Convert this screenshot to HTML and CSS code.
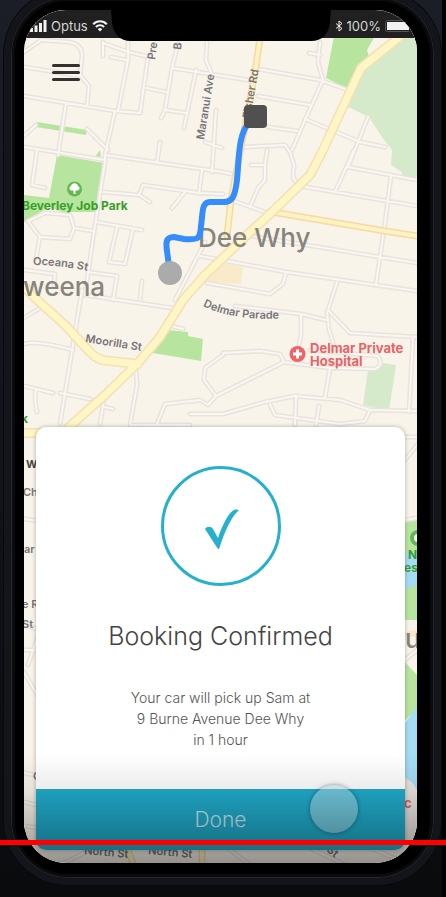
FILE: index.html
```html
<!DOCTYPE html>
<html lang="en">
<head>
<meta charset="utf-8">
<meta name="viewport" content="width=device-width, initial-scale=1">
<title>Booking Confirmed</title>
<link rel="stylesheet" href="styles.css">
</head>
<body>
<div class="phone">
  <div class="screen">
    <svg class="map" viewBox="24 10 393 853" preserveAspectRatio="xMidYMin slice" aria-hidden="true">
      <defs>
        <path id="streets" d="M24 52L40 41M40 40L70 42Q82 45 82 55L80 75L89 86L87 106M24 67L80 76M24 96L115 111L140 113L148 57M103 42V56M103 43L128 52L150 57M128 42V60L118 111M111 57L126 60M178 44L172 68L165 110L161 118M146 88L166 92M172 68L248 80M196 70L184 128M165 110L186 113M207 42L206 60L211 72M115 111L105 155M66 103L58 155M24 136L36 125M87 129L108 150M24 147L105 160M160 142L157 163M205 142L222 148M216 110L212 172
        M258 69L320 80L348 90M320 42L318 62L323 80L305 120L292 150M309 53L320 55M258 96L310 105M268 127L297 131M305 119L360 142L385 147M368 117L348 167M243 147L285 145L290 152L294 165L293 178L300 186L335 192L417 206M223 172L232 174M231 200L265 212M251 165H265L267 150M265 165V180L258 188L250 207M354 150L335 192M348 167L417 180M391 176L384 230L376 284M245 235L417 263M200 256L286 272L417 291M286 272L283 284L270 294L207 283M338 279L328 310L350 333L417 337
        M105 155L223 172M105 155V162L92 245L85 295M37 150L32 185L45 188M202 170L199 193M103 192L139 195L143 185L199 193L223 194M139 195L150 202M185 192L172 208M28 221L45 213L70 215L74 228L70 239L40 237ZM74 228L93 231M40 237L36 258M96 222L142 230M117 227L109 262L125 264L133 229M24 270L55 274L54 285M88 272L117 276L113 300M142 281L140 300M205 242L175 300
        M82 290L60 424M24 344Q35 340 73 350M24 318L40 308M24 386L53 393M36 389Q34 400 37 412M60 393L90 399M105 393L100 424M104 407L113 409M85 295L172 308M168 325L183 329M136 370L137 385L130 425M130 425H190M223 355L205 368L204 380L216 396L208 405L200 400L165 404L157 424M216 396L284 362L280 354L260 351L223 353M235 306L301 314L326 320M301 314V335L299 345M327 312L329 330L334 345M413 337L409 412M284 362L330 368L375 369Q384 365 378 356L310 350M330 368L325 398M190 414H223L265 402L295 396L340 400L370 410L417 411M270 404L275 415L340 424L365 421L370 410M296 397L295 425M319 406L316 425M405 437H417
        M24 519L40 521M24 625L40 630L28 665M24 650H40M24 672L40 700M24 773L40 776M24 802L40 806M24 826L40 828M405 520L417 518M405 460L417 445M405 660L417 650M60 865L90 850M230 850L250 865M310 848L345 865M375 850L410 865"/>
        <path id="main-roads" d="M402 35L361 68L347 98L323 150L310 175L272 212L245 237L205 275L183 300L160 337L138 363L105 395L68 428M24 287L35 298L65 325L90 352Q98 361 110 361L138 364M24 433H60"/>
        <path id="side-roads" d="M260 38L256 66L250 100L231 200L227 236M272 212L385 231L417 236M128 850L134 866M202 850V866"/>
        <path id="oceana" d="M33 265Q62 265 92 272"/>
        <path id="parade" d="M203 306Q235 322 290 318"/>
      </defs>
      <rect class="land" x="24" y="10" width="393" height="853"/>
      <path class="park" d="M334 36H375L367 50L370 60L348 89L326 78ZM57 155L104 163L98 212H62L49 207L24 222V195L49 198ZM95 157L100 150L101 158ZM37 122L87 130L86 135L36 127ZM167 330L188 332V336L203 339L201 361L153 353ZM403 522L417 518V620H403ZM403 660L417 675V710L403 722Z"/>
      <path class="wood" d="M417 36L400 40L360 70L346 106L369 117L376 128L384 140L392 150L391 165L402 172V177H417ZM383 363L396 365L389 411L363 405L368 370Z"/>
      <path class="water" d="M403 552H417V585L403 590ZM403 726L417 706V790L403 776Z"/>
      <path class="block" d="M207 268L226 264L243 266L241 284L207 282ZM403 632L417 630V637H403Z"/>
      <path class="shore" d="M403 778Q417 780 417 800V840H403Z"/>
      <use href="#streets" class="street-edge"/>
      <use href="#streets" class="street"/>
      <use href="#side-roads" class="side-edge"/>
      <use href="#side-roads" class="side"/>
      <use href="#main-roads" class="main-edge"/>
      <use href="#main-roads" class="main-road"/>
      <g class="street-name">
        <text transform="translate(155 60) rotate(-82)">Pre</text>
        <text transform="translate(181 50) rotate(-84)">B</text>
        <text transform="translate(204 140) rotate(-81)">Maranui Ave</text>
        <text transform="translate(250 119) rotate(-80)">Fisher Rd</text>
        <text><textPath href="#oceana">Oceana St</textPath></text>
        <text><textPath href="#parade">Delmar Parade</textPath></text>
        <text transform="translate(85 342) rotate(9)">Moorilla St</text>
        <text class="strong" x="26" y="468">W</text>
        <text x="23" y="496">Ch</text>
        <text x="24" y="553">ar</text>
        <text x="22" y="608">e R</text>
        <text x="22" y="628">St</text>
        <text x="33" y="780">C</text>
        <text transform="translate(84 854) rotate(5)">North St</text>
        <text transform="translate(148 854) rotate(5)">North St</text>
        <text transform="translate(326 851) rotate(38)">St</text>
      </g>
      <g class="suburb">
        <text x="198" y="247">Dee Why</text>
        <text x="23" y="296">weena</text>
        <text x="405" y="648">u</text>
      </g>
      <g class="park-name">
        <text x="22" y="210">Beverley Job Park</text>
        <text x="21" y="423">k</text>
        <text x="408" y="559">N</text>
        <text x="404" y="572">es</text>
      </g>
      <circle class="park-pin" cx="74.500" cy="189" r="7.500"/>
      <path class="pin-glyph" d="M73.500 194v-3.500h-2a2.300 2.300 0 0 1-.5-4.500 3.600 3.600 0 0 1 7 0 2.300 2.300 0 0 1-.5 4.500h-2v3.500z"/>
      <circle class="park-pin" cx="418" cy="538" r="8"/>
      <circle class="pin-glyph" cx="418" cy="538" r="4"/>
      <circle class="care-pin" cx="297.500" cy="354" r="8"/>
      <path class="pin-glyph" d="M296 349.500h3v3h3v3h-3v3h-3v-3h-3v-3h3z"/>
      <g class="care-name">
        <text x="310" y="353">Delmar Private</text>
        <text x="310" y="366">Hospital</text>
        <text x="404" y="808">c</text>
      </g>
      <path class="route" d="M250 122C238 132 239 160 237 180C235 197 232 202 224 202H211C201 201 203 214 201 226C200 239 199 240 184 239L174 237C165 237 166 244 167 251L169 266"/>
      <rect class="route-end" x="244" y="105" width="23" height="23" rx="4"/>
      <circle class="route-start" cx="170" cy="273" r="12"/>
    </svg>

    <header class="status">
      <div class="status-side">
        <svg class="signal" width="17" height="12" viewBox="0 0 17 12" aria-hidden="true"><path d="M0 8h3v4H0zM4.500 5.500h3V12h-3zM9 3h3v9H9zM13.500 0h3v12h-3z"/></svg>
        <span>Optus</span>
        <svg width="16" height="12" viewBox="0 0 16 12" aria-hidden="true"><path class="wave" d="M1.200 4.200a9.500 9.500 0 0 1 13.600 0M3.900 7a5.600 5.600 0 0 1 8.200 0"/><path d="M5.800 9.200a3.100 3.100 0 0 1 4.400 0L8 11.600z"/></svg>
      </div>
      <svg class="notch" viewBox="0 0 220 32" preserveAspectRatio="none" aria-hidden="true"><path d="M0 0L1 12C2 24 9 31 20 31H200C211 31 218 24 219 12L220 0Z"/></svg>
      <div class="status-side status-end">
        <svg width="8" height="12" viewBox="0 0 8 12" aria-hidden="true"><path class="rune" d="M1 3.500l6 5-3 2.500V1l3 2.500-6 5"/></svg>
        <span>100%</span>
        <svg class="battery" width="24" height="12" viewBox="0 0 24 12" aria-hidden="true"><rect class="shell" x=".5" y=".5" width="26" height="11" rx="2"/><path d="M2 2h22v8H2z"/></svg>
      </div>
    </header>

    <button class="menu" type="button" aria-label="Menu"><span></span><span></span><span></span></button>

    <main class="card">
      <svg class="tick" viewBox="0 0 120 120" aria-hidden="true"><circle cx="60" cy="60" r="58.500"/><path d="M44 63C46 60 50 60 52 63L57 72C61 60 67 47 73 44C75 43 77 44 78 44C70 51 64 65 58 83H57Z"/></svg>
      <h1>Booking Confirmed</h1>
      <p>Your car will pick up Sam at<br>9 Burne Avenue Dee Why<br>in 1 hour</p>
      <div class="action">
        <button class="done" type="button">Done</button>
        <span class="touch"></span>
      </div>
    </main>
    <div class="shade"></div>
  </div>
</div>
<div class="progress"></div>
</body>
</html>
```
FILE: styles.css
```css
* {
  box-sizing: border-box;
}

html {
  overflow: hidden;
  background: #000;
}

body {
  position: relative;
  display: flex;
  min-height: 100vh;
  margin: 0;
  background:
    linear-gradient(#000, #000) right / 4px 100% no-repeat,
    linear-gradient(#1b1e27, #111218 60%, #0a0b0d);
  font-family: Inter, "Liberation Sans", sans-serif;
}

button {
  border: 0;
  font: inherit;
}

.phone {
  display: flex;
  flex: 1;
  margin: -10px 5px 12px 4px;
  padding: 13px 17px 15px 13px;
  border: 7px solid #14151b;
  border-radius: 64px;
  background: #000;
  box-shadow: 0 0 0 1px #08090c, inset 0 0 0 1px #26272d, inset 0 0 0 4px #0b0b0e;
}

.screen {
  position: relative;
  display: flex;
  flex: 1;
  flex-direction: column;
  overflow: hidden;
  border-radius: 42px;
  background: #f8f4e9;
}

.map {
  position: absolute;
  inset: 0;
  width: 100%;
  height: 100%;
}

.map path,
.map use {
  stroke-linecap: round;
  stroke-linejoin: round;
}

.land { fill: #f8f4e9; }
.park { fill: #b7e5a0; }
.wood { fill: #d5eacb; }
.water { fill: #a5dcf5; }
.block { fill: #f9ebc9; }
.shore { fill: #e9e5e0; }

.street-edge { fill: none; stroke: #e9e2dd; stroke-width: 5px; }
.street { fill: none; stroke: #faf7f2; stroke-width: 2px; }
.side-edge { fill: none; stroke: #f6d9a4; stroke-width: 7px; }
.side { fill: none; stroke: #fdf3c3; stroke-width: 4px; }
.main-edge { fill: none; stroke: #f6dfb4; stroke-width: 10px; }
.main-road { fill: none; stroke: #fef6c5; stroke-width: 7px; }

.street-name {
  fill: #77757a;
  font-size: 11px;
  font-weight: 600;
}

.street-name .strong { fill: #444; font-weight: 700; }
.suburb { fill: #87847e; font-size: 26px; font-weight: 500; }
.park-name { fill: #36a025; font-size: 12px; font-weight: 700; }
.care-name { fill: #e96368; font-size: 13px; font-weight: 700; }
.park-pin { fill: #62b951; }
.care-pin { fill: #ec6669; }
.pin-glyph { fill: #fff; }
.route { fill: none; stroke: #358cfb; stroke-width: 6px; }
.route-end { fill: #505050; }
.route-start { fill: #ababab; }

.status {
  position: relative;
  display: grid;
  grid-template-columns: 1fr 220px 1fr;
  height: 28px;
  background: #202020;
  color: #d6d6d6;
  font-size: 13px;
}

.status-side {
  display: flex;
  align-items: center;
  gap: 4px;
  padding-left: 6px;
}

.status-end {
  justify-content: flex-end;
  padding: 0 8px 0 0;
}

.status-side svg {
  flex: none;
  fill: #f2f2f2;
}

.status .wave,
.status .rune {
  fill: none;
  stroke: #f2f2f2;
}

.status .wave { stroke-width: 2px; }
.status .rune { stroke-width: 1px; }
.status .shell { fill: none; stroke: #555; }

.status .notch {
  width: 100%;
  height: 32px;
  fill: #000;
}

.menu {
  position: relative;
  display: flex;
  flex-direction: column;
  gap: 4px;
  width: 28px;
  margin: 26px 0 0 28px;
  padding: 0;
  background: none;
}

.menu span {
  height: 3px;
  border-radius: 2px;
  background: #35312f;
}

.card {
  position: relative;
  display: flex;
  flex-direction: column;
  align-items: center;
  margin: auto 12px 13px;
  border-radius: 10px;
  background: #fff;
  box-shadow: 0 0 4px rgba(0, 0, 0, 0.3);
  text-align: center;
}

.tick {
  width: 120px;
  margin-top: 39px;
  fill: #25b0ce;
}

.tick circle {
  fill: none;
  stroke: #25b0ce;
  stroke-width: 3px;
}

h1 {
  margin: 32px 0 0;
  color: #444;
  font-size: 25px;
  font-weight: 300;
  line-height: 36px;
}

p {
  margin: 33px 0 39px;
  color: #555;
  font-size: 14px;
  font-weight: 300;
  line-height: 21px;
}

.action {
  position: relative;
  align-self: stretch;
}

.done {
  width: 100%;
  height: 61px;
  padding: 0;
  border-radius: 0 0 10px 10px;
  background: #20abcb;
  color: #c7e9f2;
  font-size: 21px;
  font-weight: 300;
}

.touch {
  position: absolute;
  top: -4px;
  right: 47px;
  width: 48px;
  height: 48px;
  border-radius: 50%;
  background: rgba(190, 225, 235, 0.5);
  box-shadow: 0 0 4px rgba(0, 40, 60, 0.5);
}

.shade {
  position: absolute;
  right: 0;
  bottom: 0;
  left: 0;
  height: 110px;
  background: linear-gradient(rgba(0, 0, 0, 0), rgba(0, 0, 0, 0.08) 35%, rgba(0, 0, 0, 0.4));
  pointer-events: none;
}

.progress {
  position: absolute;
  right: 0;
  bottom: 52px;
  left: 0;
  height: 5px;
  background: #f00;
}
```
